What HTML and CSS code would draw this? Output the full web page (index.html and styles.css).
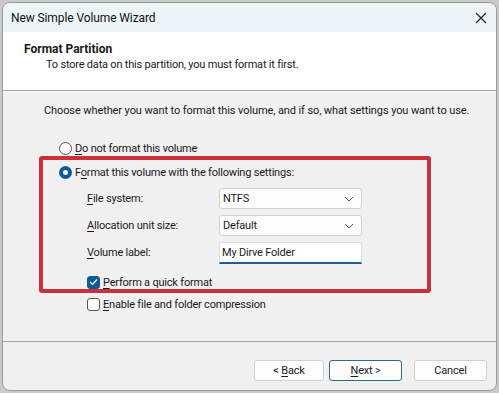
FILE: index.html
```html
<!DOCTYPE html>
<html lang="en">
<head>
    <meta charset="UTF-8">
    <meta name="viewport" content="width=device-width, initial-scale=1.0">
    <title>New Simple Volume Wizard</title>
    <link rel="stylesheet" href="styles.css">
</head>
<body>
    <div class="wiz_window">
        <div class="wiz_titlebar">
            <span class="wiz_title">New Simple Volume Wizard</span>
            <svg class="wiz_close" width="12" height="12" viewBox="0 0 12 12">
                <path d="M1 1 L11 11 M11 1 L1 11" stroke="#222" stroke-width="1.2" fill="none"/>
            </svg>
        </div>

        <div class="wiz_header">
            <div class="wiz_header_title">Format Partition</div>
            <div class="wiz_header_desc">To store data on this partition, you must format it first.</div>
        </div>

        <div class="wiz_body">
            <p class="wiz_intro">Choose whether you want to format this volume, and if so, what settings you want to use.</p>

            <div class="wiz_options">
                <label class="wiz_choice">
                    <span class="wiz_radio"></span>
                    <span><u>D</u>o not format this volume</span>
                </label>

                <label class="wiz_choice">
                    <span class="wiz_radio wiz_radio_on"></span>
                    <span>F<u>o</u>rmat this volume with the following settings:</span>
                </label>

                <div class="wiz_settings">
                    <div class="wiz_field">
                        <span class="wiz_label"><u>F</u>ile system:</span>
                        <div class="wiz_combo">
                            <span>NTFS</span>
                            <svg width="10" height="6" viewBox="0 0 10 6"><path d="M1 1 L5 5 L9 1" stroke="#555" fill="none"/></svg>
                        </div>
                    </div>
                    <div class="wiz_field">
                        <span class="wiz_label"><u>A</u>llocation unit size:</span>
                        <div class="wiz_combo">
                            <span>Default</span>
                            <svg width="10" height="6" viewBox="0 0 10 6"><path d="M1 1 L5 5 L9 1" stroke="#555" fill="none"/></svg>
                        </div>
                    </div>
                    <div class="wiz_field">
                        <span class="wiz_label"><u>V</u>olume label:</span>
                        <div class="wiz_textbox">My Dirve Folder</div>
                    </div>

                    <label class="wiz_choice wiz_check_row">
                        <span class="wiz_check wiz_check_on">
                            <svg width="9" height="8" viewBox="0 0 9 8"><path d="M1 4 L3.5 6.5 L8 1.5" stroke="#fff" stroke-width="1.2" fill="none"/></svg>
                        </span>
                        <span><u>P</u>erform a quick format</span>
                    </label>
                </div>

                <label class="wiz_choice wiz_check_row wiz_compress">
                    <span class="wiz_check"></span>
                    <span><u>E</u>nable file and folder compression</span>
                </label>

                <div class="wiz_highlight"></div>
            </div>
        </div>

        <div class="wiz_footer">
            <button class="wiz_btn">&lt; <u>B</u>ack</button>
            <button class="wiz_btn wiz_btn_default"><u>N</u>ext &gt;</button>
            <button class="wiz_btn wiz_btn_cancel">Cancel</button>
        </div>
    </div>
</body>
</html>
```

FILE: styles.css
```css
* {
    margin: 0;
    padding: 0;
    box-sizing: border-box;
}

body {
    font-family: Roboto, 'Liberation Sans', sans-serif;
    font-size: 11px;
    letter-spacing: -0.2px;
    color: #1a1a1a;
    background: #c9c9c9;
    padding: 2px;
}

u {
    text-decoration-thickness: 1px;
    text-underline-offset: 2px;
}

.wiz_window {
    width: 495px;
    height: 389px;
    background: #f0f0f0;
    border: 1px solid #9a9a9a;
    border-radius: 8px;
    overflow: hidden;
    display: flex;
    flex-direction: column;
}

.wiz_titlebar {
    height: 29px;
    background: #ecf4f7;
    display: flex;
    align-items: center;
    justify-content: space-between;
    padding: 0 9px 0 8px;
}

.wiz_title {
    font-size: 12px;
    letter-spacing: -0.1px;
    color: #111;
}

.wiz_header {
    height: 59px;
    background: #fff;
    border-bottom: 1px solid #a0a0a0;
    padding: 9px 0 0 21px;
}

.wiz_header_title {
    font-weight: 700;
    font-size: 12px;
    letter-spacing: 0;
    line-height: 16px;
}

.wiz_header_desc {
    padding-left: 22px;
    line-height: 16px;
}

.wiz_body {
    flex: 1;
    border-top: 1px solid #fff;
    border-bottom: 1px solid #a0a0a0;
    padding: 10px 0 0 41px;
}

.wiz_intro {
    line-height: 18px;
    letter-spacing: -0.1px;
    white-space: nowrap;
}

.wiz_options {
    position: relative;
    margin-top: 16px;
    padding-left: 15px;
    display: flex;
    flex-direction: column;
}

.wiz_choice {
    display: flex;
    align-items: center;
    gap: 3px;
    height: 24px;
}

.wiz_radio {
    width: 13px;
    height: 13px;
    border-radius: 50%;
    border: 1px solid #555;
    background: #fff;
}

.wiz_radio_on {
    border: 4px solid #0f5a99;
    background: #fff;
}

.wiz_settings {
    padding: 1px 0 0 28px;
}

.wiz_field {
    display: flex;
    align-items: center;
    height: 27px;
}

.wiz_label {
    width: 132px;
}

.wiz_combo {
    width: 143px;
    height: 21px;
    background: #fdfdfd;
    border: 1px solid #d0d0d0;
    border-radius: 3px;
    display: flex;
    align-items: center;
    justify-content: space-between;
    padding: 0 7px 0 3px;
}

.wiz_textbox {
    width: 143px;
    height: 22px;
    background: #fff;
    border: 1px solid #dcdcdc;
    border-bottom: 2px solid #1f5f8b;
    border-radius: 3px 3px 0 0;
    padding: 3px 0 0 2px;
}

.wiz_check_row {
    margin-top: 4px;
}

.wiz_check {
    width: 13px;
    height: 13px;
    border: 1px solid #555;
    border-radius: 3px;
    background: #fff;
    display: flex;
    align-items: center;
    justify-content: center;
}

.wiz_check_on {
    background: #0f5a99;
    border-color: #0f5a99;
}

.wiz_compress {
    margin-left: 28px;
    margin-top: -2px;
}

.wiz_highlight {
    position: absolute;
    left: -5px;
    top: 20px;
    width: 392px;
    height: 137px;
    border: 4px solid #c9303a;
    border-radius: 3px;
}

.wiz_footer {
    height: 48px;
    display: flex;
    justify-content: flex-end;
    padding: 18px 9px 0 0;
}

.wiz_btn {
    width: 70px;
    height: 21px;
    font-family: inherit;
    font-size: 11px;
    letter-spacing: -0.2px;
    color: #1a1a1a;
    background: #fdfdfd;
    border: 1px solid #d0d0d0;
    border-radius: 3px;
    margin-left: 5px;
}

.wiz_btn_default {
    width: 73px;
    border: 1px solid #2d6a8e;
}

.wiz_btn_cancel {
    width: 73px;
    margin-left: 12px;
}
```
